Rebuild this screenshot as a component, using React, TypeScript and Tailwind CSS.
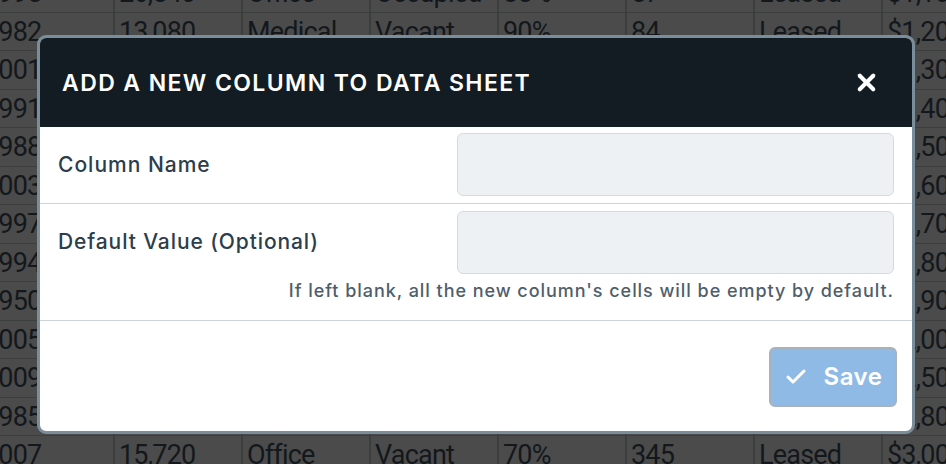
import React from 'react';
import { X, Check } from 'lucide-react';

// Background sheet rows (dimmed behind the modal)
const rows: string[][] = [
  ['1995', '26,540', 'Office', 'Occupied', '85%', '57', 'Leased', '$1,100'],
  ['1982', '13,080', 'Medical', 'Vacant', '90%', '84', 'Leased', '$1,200'],
  ['2001', '18,200', 'Office', 'Occupied', '75%', '120', 'Leased', '$1,300'],
  ['1991', '22,450', 'Retail', 'Vacant', '60%', '98', 'Owned', '$1,400'],
  ['1988', '9,870', 'Office', 'Occupied', '95%', '45', 'Leased', '$1,500'],
  ['2003', '31,200', 'Medical', 'Occupied', '80%', '210', 'Leased', '$1,600'],
  ['1997', '14,300', 'Retail', 'Vacant', '65%', '76', 'Owned', '$1,700'],
  ['1994', '27,650', 'Office', 'Occupied', '88%', '132', 'Leased', '$1,800'],
  ['1950', '11,040', 'Industrial', 'Vacant', '50%', '64', 'Owned', '$1,900'],
  ['2005', '19,980', 'Office', 'Occupied', '92%', '156', 'Leased', '$2,000'],
  ['2009', '24,310', 'Medical', 'Vacant', '70%', '188', 'Leased', '$2,500'],
  ['1985', '16,430', 'Retail', 'Occupied', '85%', '102', 'Owned', '$2,800'],
  ['2007', '15,720', 'Office', 'Vacant', '70%', '345', 'Leased', '$3,000'],
];

const SheetBackground: React.FC = () => (
  <div className="absolute left-[-20px] top-[-26px] flex flex-col">
    {rows.map((row, i) => (
      <div key={i} className="flex h-[38.5px] border-b border-[#3a3e3d]">
        {row.map((cell, j) => (
          <div
            key={j}
            className={`${j === 0 ? 'w-[135px]' : 'w-[128px]'} shrink-0 border-r-2 border-[#3a3e3d] pl-[4px] pt-[3px] text-[27px] leading-[32px] text-[#13181c] whitespace-nowrap overflow-hidden tracking-[-0.8px]`}
            style={{ fontFamily: '"Roboto", "Liberation Sans", sans-serif' }}
          >
            {cell}
          </div>
        ))}
      </div>
    ))}
  </div>
);

export default function App() {
  return (
    <div
      className="relative w-[946px] h-[464px] overflow-hidden bg-[#4b4b4b]"
      style={{ fontFamily: '"Inter", "Noto Sans", sans-serif' }}
    >
      <SheetBackground />

      {/* Modal */}
      <div className="absolute left-[37px] top-[35px] w-[878px] h-[399px] border-[3px] border-[#7a8d9b] rounded-[9px] bg-white overflow-hidden flex flex-col">
        {/* Header */}
        <div className="h-[89px] bg-[#121c22] flex items-center justify-between pl-[22px] pr-[32px] shrink-0">
          <h2 className="text-white text-[23px] font-semibold tracking-[1.4px] pt-[2px]">
            ADD A NEW COLUMN TO DATA SHEET
          </h2>
          <X className="w-[27px] h-[27px] text-white" strokeWidth={3.6} />
        </div>

        {/* Column Name */}
        <div className="flex h-[77px] border-b border-[#ccd5dc] shrink-0">
          <div className="w-[417px] pl-[18px] flex items-center text-[21px] font-medium text-[#2c3d4b] tracking-[1px] pb-[1px]">
            Column Name
          </div>
          <div className="flex-1 pt-[6px] pr-[18px]">
            <input
              type="text"
              className="w-full h-[63px] bg-[#eef1f4] border border-[#d4dadf] rounded-[6px] outline-none"
            />
          </div>
        </div>

        {/* Default Value */}
        <div className="flex flex-col h-[117px] border-b border-[#ccd5dc] shrink-0">
          <div className="flex">
            <div className="w-[417px] pl-[18px] flex items-center text-[21px] font-medium text-[#2c3d4b] tracking-[0.9px] pt-[6px]">
              Default Value (Optional)
            </div>
            <div className="flex-1 pt-[7px] pr-[18px]">
              <input
                type="text"
                className="w-full h-[63px] bg-[#eef1f4] border border-[#d4dadf] rounded-[6px] outline-none"
              />
            </div>
          </div>
          <p className="text-right pr-[18px] pt-[5px] text-[18px] leading-[24px] font-medium text-[#4f5e6b] tracking-[0.95px] whitespace-nowrap">
            If left blank, all the new column's cells will be empty by default.
          </p>
        </div>

        {/* Footer */}
        <div className="flex-1 flex justify-end items-start pt-[26px] pr-[15px]">
          <button className="w-[128px] h-[60px] bg-[#90bae6] border-2 border-[#a9b2ba] rounded-[6px] flex items-center justify-center gap-[16px] text-white text-[24px] font-semibold tracking-[0.5px]">
            <Check className="w-[24px] h-[24px]" strokeWidth={3} />
            <span>Save</span>
          </button>
        </div>
      </div>
    </div>
  );
}
